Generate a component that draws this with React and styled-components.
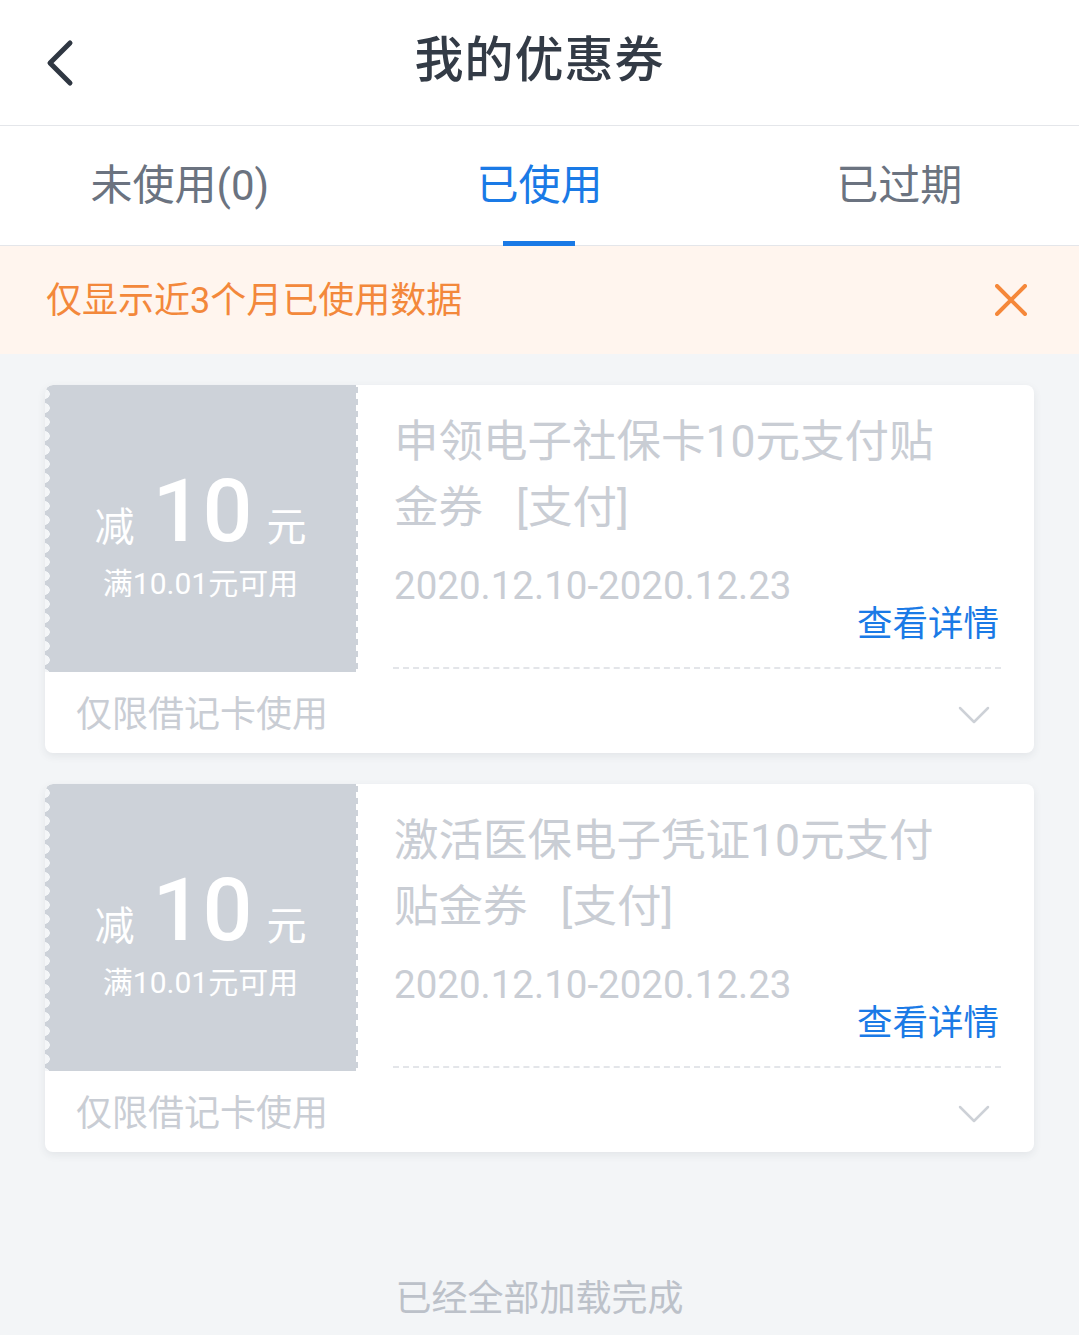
import React from "react";
import styled, { createGlobalStyle } from "styled-components";

const Global = createGlobalStyle`
  html, body { margin: 0; padding: 0; background: #f3f5f7; }
  body { font-family: "Roboto", "Noto Sans CJK SC", "Noto Sans", sans-serif; -webkit-font-smoothing: antialiased; }
  * { box-sizing: border-box; }
`;

const Page = styled.div`
  width: 1079px;
  min-height: 1335px;
  background: #f3f5f7;
  display: flex;
  flex-direction: column;
`;

const Header = styled.header`
  height: 126px;
  background: #fff;
  border-bottom: 1px solid #e4e6ea;
  display: grid;
  grid-template-columns: 120px 1fr 120px;
  align-items: center;
`;

const BackBtn = styled.button`
  border: 0;
  background: none;
  padding: 0 0 0 44px;
  height: 60px;
  display: flex;
  align-items: center;
  cursor: pointer;
`;

const Title = styled.h1`
  margin: 0;
  text-align: center;
  font-size: 49px;
  font-weight: 500;
  color: #333b46;
  letter-spacing: 1px;
  line-height: 1;
  padding-bottom: 4px;
`;

const Tabs = styled.nav`
  height: 120px;
  background: #fff;
  border-bottom: 1px solid #e4e6ea;
  display: grid;
  grid-template-columns: repeat(3, 1fr);
`;

const Tab = styled.div`
  position: relative;
  display: flex;
  align-items: center;
  justify-content: center;
  font-size: 42px;
  color: ${(p) => (p.$active ? "#1a7ae6" : "#6b7380")};
  padding-bottom: 9px;
  &::after {
    content: "";
    display: ${(p) => (p.$active ? "block" : "none")};
    position: absolute;
    bottom: -1px;
    left: 50%;
    width: 72px;
    margin-left: -36px;
    height: 5px;
    background: #1a7ae6;
  }
`;

const Notice = styled.div`
  height: 108px;
  background: #fff5ee;
  display: flex;
  align-items: center;
  justify-content: space-between;
  padding: 0 52px 0 46px;
  color: #f3883b;
  font-size: 36px;
`;

const NoticeText = styled.span`
  padding-bottom: 6px;
`;

const CloseBtn = styled.span`
  display: flex;
  width: 32px;
  height: 32px;
`;

const List = styled.main`
  display: flex;
  flex-direction: column;
  gap: 31px;
  padding: 31px 45px 0 45px;
`;

const Card = styled.section`
  background: #fff;
  border-radius: 8px;
  box-shadow: 0 3px 8px rgba(40, 50, 70, 0.08);
  overflow: hidden;
  display: flex;
  flex-direction: column;
`;

const CardTop = styled.div`
  display: flex;
  height: 287px;
`;

const Stub = styled.div`
  position: relative;
  width: 311px;
  flex-shrink: 0;
  background: #cdd2d9;
  color: #fff;
  display: flex;
  flex-direction: column;
  align-items: center;
  justify-content: center;
  padding-top: 8px;
  border-top-left-radius: 8px;
  &::before {
    content: "";
    position: absolute;
    left: 0;
    top: 0;
    bottom: 0;
    width: 6px;
    background: radial-gradient(circle at 0 7px, #f4f6f8 4.5px, transparent 5px) 0 2px / 6px 14px repeat-y;
  }
  &::after {
    content: "";
    position: absolute;
    right: -2px;
    top: 0;
    bottom: 0;
    width: 2px;
    background: linear-gradient(#cdd2d9 0 50%, transparent 50% 100%) 0 2px / 2px 12px repeat-y;
  }
`;

const Amount = styled.div`
  display: flex;
  align-items: baseline;
  line-height: 1;
`;

const Unit = styled.span`
  font-size: 40px;
  font-family: "Noto Sans CJK SC", sans-serif;
`;

const Value = styled.span`
  font-size: 88px;
  font-weight: 500;
  font-family: "Roboto", sans-serif;
  margin: 0 14px 0 18px;
`;

const Cond = styled.div`
  font-size: 30px;
  margin-top: 14px;
  line-height: 1;
`;

const Info = styled.div`
  flex: 1;
  display: flex;
  flex-direction: column;
  padding: 24px 33px 0 38px;
`;

const Name = styled.div`
  font-size: 44.5px;
  line-height: 66px;
  color: #c9cdd4;
  max-width: 570px;
`;

const Dates = styled.div`
  font-size: 38.5px;
  line-height: 40px;
  color: #c9cdd4;
  margin-top: 25px;
`;

const Link = styled.a`
  align-self: flex-end;
  font-size: 35.5px;
  line-height: 36px;
  color: #1a7ae6;
  text-decoration: none;
  margin-right: 2px;
`;

const Divider = styled.div`
  margin-top: auto;
  margin-bottom: 3px;
  margin-left: -1px;
  height: 0;
  border-top: 2px dashed #e3e5e9;
`;

const CardBottom = styled.div`
  height: 81px;
  display: flex;
  align-items: center;
  justify-content: space-between;
  padding: 0 44px 4px 31px;
  font-size: 36px;
  color: #c9cdd4;
`;

const Chevron = styled.svg`
  margin-top: 8px;
`;

const Footer = styled.footer`
  text-align: center;
  font-size: 36px;
  color: #bcc1c9;
  margin-top: 124px;
  line-height: 46px;
`;

const coupons = [
  { name: "申领电子社保卡10元支付贴金券\u00a0\u00a0\u00a0[支付]", date: "2020.12.10-2020.12.23" },
  { name: "激活医保电子凭证10元支付贴金券\u00a0\u00a0\u00a0[支付]", date: "2020.12.10-2020.12.23" },
];

export default function App() {
  return (
    <Page>
      <Global />
      <Header>
        <BackBtn aria-label="返回">
          <svg width="30" height="48" viewBox="0 0 30 48">
            <path d="M26 4 L6 24 L26 44" fill="none" stroke="#2f3742" strokeWidth="5" strokeLinecap="round" strokeLinejoin="round" />
          </svg>
        </BackBtn>
        <Title>我的优惠券</Title>
        <div />
      </Header>
      <Tabs>
        <Tab>未使用(0)</Tab>
        <Tab $active>已使用</Tab>
        <Tab>已过期</Tab>
      </Tabs>
      <Notice>
        <NoticeText>仅显示近3个月已使用数据</NoticeText>
        <CloseBtn>
          <svg width="32" height="32" viewBox="0 0 32 32">
            <path d="M2 2 L30 30 M30 2 L2 30" stroke="#f5883a" strokeWidth="4" strokeLinecap="round" />
          </svg>
        </CloseBtn>
      </Notice>
      <List>
        {coupons.map((c, i) => (
          <Card key={i}>
            <CardTop>
              <Stub>
                <Amount>
                  <Unit>减</Unit>
                  <Value>10</Value>
                  <Unit>元</Unit>
                </Amount>
                <Cond>满10.01元可用</Cond>
              </Stub>
              <Info>
                <Name>{c.name}</Name>
                <Dates>{c.date}</Dates>
                <Link>查看详情</Link>
                <Divider />
              </Info>
            </CardTop>
            <CardBottom>
              <span>仅限借记卡使用</span>
              <Chevron width="32" height="20" viewBox="0 0 32 20">
                <path d="M2 3 L16 17 L30 3" fill="none" stroke="#cdd1d7" strokeWidth="2.5" strokeLinecap="round" strokeLinejoin="round" />
              </Chevron>
            </CardBottom>
          </Card>
        ))}
      </List>
      <Footer>已经全部加载完成</Footer>
    </Page>
  );
}
